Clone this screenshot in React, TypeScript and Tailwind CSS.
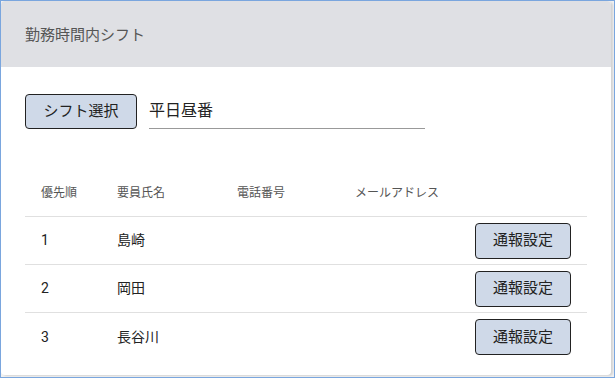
import React from 'react';

const rows = [
  { no: 1, name: '島崎' },
  { no: 2, name: '岡田' },
  { no: 3, name: '長谷川' },
];

const App: React.FC = () => {
  return (
    <div className="w-[615px] h-[378px] border border-[#7aa6de] bg-[#f1f1f1] font-['Roboto','Noto_Sans_CJK_JP',sans-serif] overflow-hidden">
      <div className="w-[610px] h-[374px] bg-white rounded-[4px] shadow-[2px_1px_2px_rgba(0,0,0,0.12)] overflow-hidden">
        <div className="h-[66px] bg-[#dfe0e4] px-6 flex items-center">
          <h1 className="text-[15px] text-[#555] pt-[2px]">勤務時間内シフト</h1>
        </div>

        <div className="px-6 pt-[27px]">
          <div className="flex items-center gap-3">
            <button className="w-[112px] h-[35px] rounded-[4px] border border-[#222] bg-[#cfd9e8] text-[15px] text-[#222]">
              シフト選択
            </button>
            <div className="w-[276px] h-[34px] border-b border-[#999] flex items-center">
              <span className="text-[16px] text-[#222]">平日昼番</span>
            </div>
          </div>

          <div className="mt-[40px] w-[562px]">
            <div className="grid grid-cols-[76px_120px_118px_1fr_112px] h-[48px] items-center border-b border-[#e0e0e0] text-[12px] text-[#555]">
              <div className="pl-4">優先順</div>
              <div className="pl-4">要員氏名</div>
              <div className="pl-4">電話番号</div>
              <div className="pl-4">メールアドレス</div>
              <div />
            </div>
            {rows.map((r, i) => (
              <div
                key={r.no}
                className={`grid grid-cols-[76px_120px_118px_1fr_112px] h-[48px] items-center text-[14px] text-[#222] ${i < rows.length - 1 ? 'border-b border-[#e0e0e0]' : ''}`}
              >
                <div className="pl-4">{r.no}</div>
                <div className="pl-4">{r.name}</div>
                <div className="pl-4" />
                <div className="pl-4" />
                <div className="pr-4 flex justify-end">
                  <button className="w-[96px] h-[36px] rounded-[4px] border border-[#222] bg-[#cfd9e8] text-[15px] text-[#222]">
                    通報設定
                  </button>
                </div>
              </div>
            ))}
          </div>
        </div>
      </div>
    </div>
  );
};

export default App;
